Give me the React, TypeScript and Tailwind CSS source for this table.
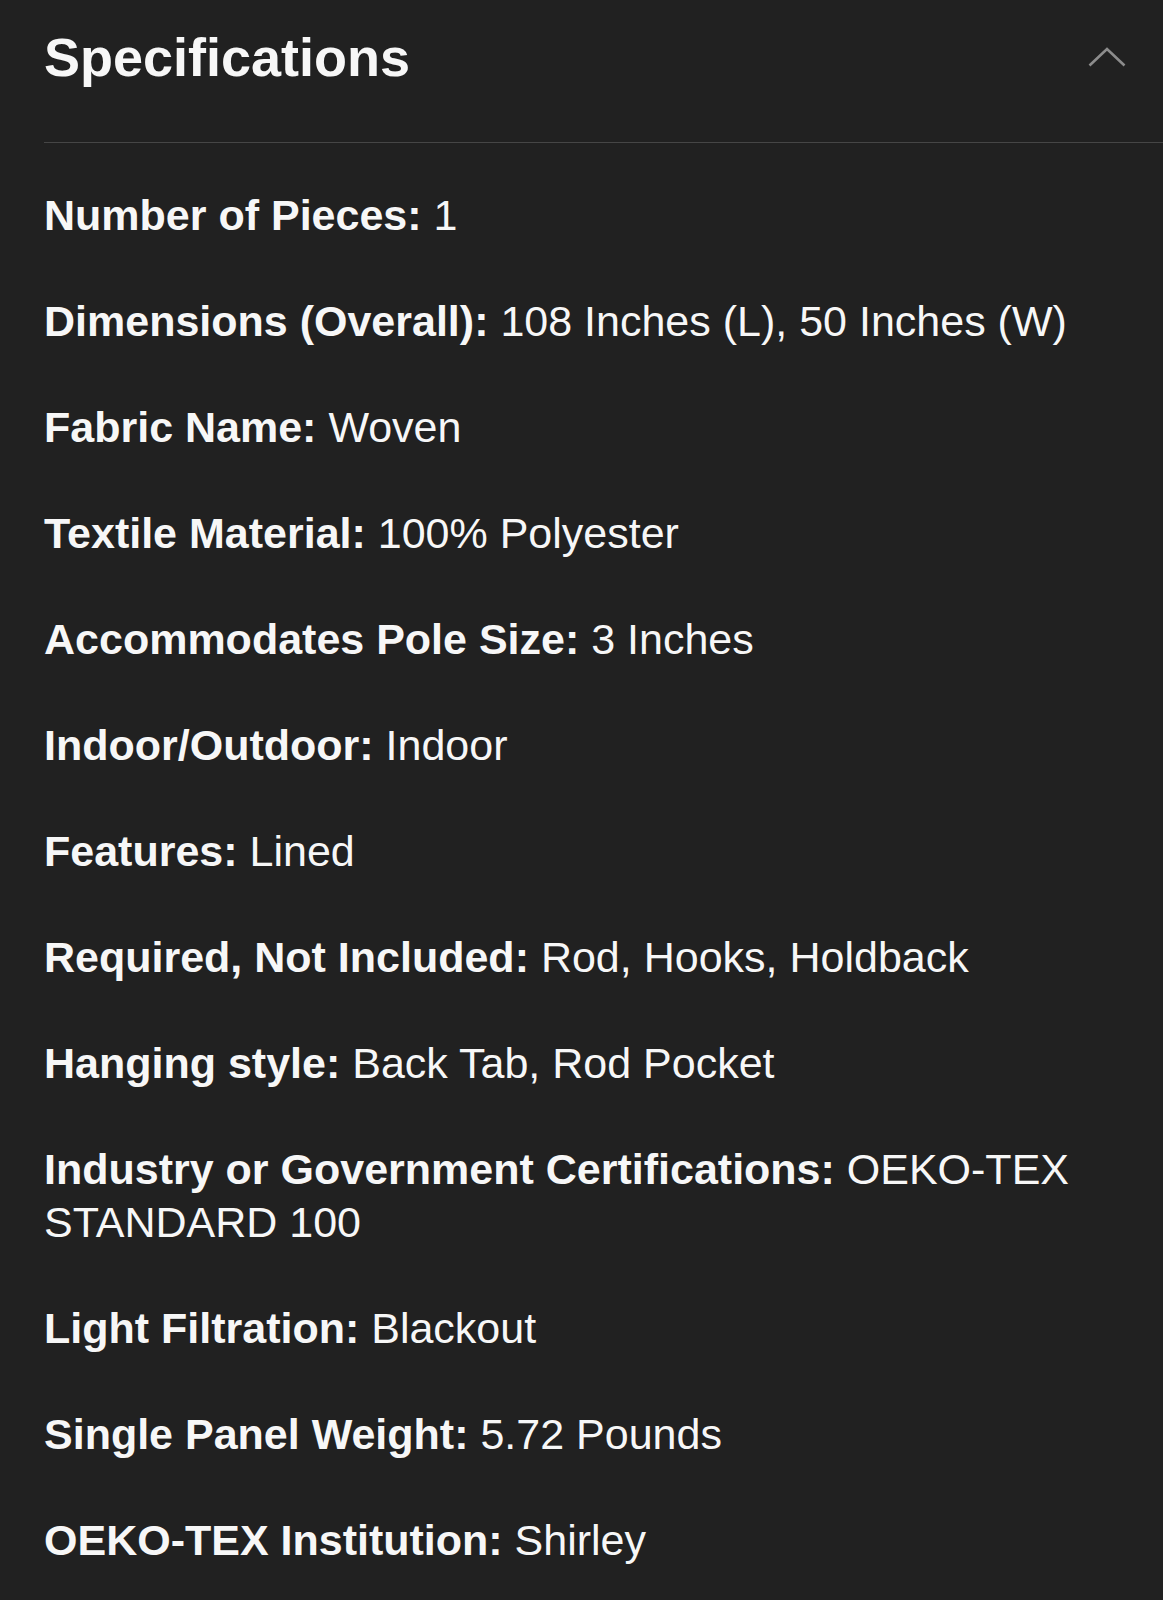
const specs: { label: string; value: string }[] = [
  { label: "Number of Pieces:", value: "1" },
  { label: "Dimensions (Overall):", value: "108 Inches (L), 50 Inches (W)" },
  { label: "Fabric Name:", value: "Woven" },
  { label: "Textile Material:", value: "100% Polyester" },
  { label: "Accommodates Pole Size:", value: "3 Inches" },
  { label: "Indoor/Outdoor:", value: "Indoor" },
  { label: "Features:", value: "Lined" },
  { label: "Required, Not Included:", value: "Rod, Hooks, Holdback" },
  { label: "Hanging style:", value: "Back Tab, Rod Pocket" },
  { label: "Industry or Government Certifications:", value: "OEKO-TEX STANDARD 100" },
  { label: "Light Filtration:", value: "Blackout" },
  { label: "Single Panel Weight:", value: "5.72 Pounds" },
  { label: "OEKO-TEX Institution:", value: "Shirley" },
];

export default function App() {
  return (
    <div className="min-h-[1600px] w-full bg-[#212121] pl-[44px] font-['Liberation_Sans',Arial,sans-serif] text-[#f7f7f7]">
      <section>
        <button
          type="button"
          className="flex w-full items-center justify-between border-b border-[#464646] pt-[25px] pb-[53px] pr-[37px] text-left"
        >
          <h2 className="text-[54px] font-bold leading-[64px]">Specifications</h2>
          <svg width="38" height="20" viewBox="0 0 38 20" fill="none" className="text-[#8c8c8c]">
            <path d="M1.5 18.5 L19 2 L36.5 18.5" stroke="currentColor" strokeWidth="2.6" />
          </svg>
        </button>

        <dl className="flex flex-col gap-[53px] pt-[46px] pr-[70px]">
          {specs.map((spec) => (
            <div key={spec.label} className="text-[43px] leading-[53px]">
              <dt className="inline font-bold">{spec.label}</dt>{" "}
              <dd className="inline">{spec.value}</dd>
            </div>
          ))}
        </dl>
      </section>
    </div>
  );
}
